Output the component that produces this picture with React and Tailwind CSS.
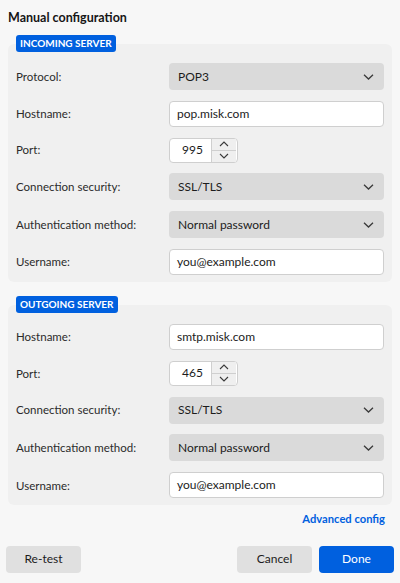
import React from 'react';

const Chevron = () => (
  <svg width="11" height="6" viewBox="0 0 11 6" className="text-[#3a3a3a]">
    <path d="M1 0.8 L5.5 5 L10 0.8" fill="none" stroke="currentColor" strokeWidth="1.3" />
  </svg>
);

const Select = ({ value }) => (
  <div className="h-[27px] w-[215px] rounded-[4px] bg-[#dadada] flex items-center justify-between pl-[9px] pr-[10px] text-[12px] text-[#1c1c1c]">
    <span>{value}</span>
    <Chevron />
  </div>
);

const TextInput = ({ value }) => (
  <div className="h-[26px] w-[215px] rounded-[4px] bg-white border border-[#cfcfcf] flex items-center px-[7px] text-[12px] text-[#1c1c1c]">
    {value}
  </div>
);

const PortInput = ({ value }) => (
  <div className="h-[25px] w-[69px] rounded-[4px] bg-white border border-[#cfcfcf] flex items-center">
    <span className="flex-1 text-right pr-[8px] text-[12px] text-[#1c1c1c]">{value}</span>
    <div className="w-[25px] h-[23px] mr-px flex flex-col border-l border-[#cfcfcf] bg-[#efefef]">
      <div className="flex-1 flex items-center justify-center border-b border-[#cfcfcf]">
        <svg width="10" height="6" viewBox="0 0 10 6">
          <path d="M1 5 L5 1 L9 5" fill="none" stroke="#3a3a3a" strokeWidth="1.1" />
        </svg>
      </div>
      <div className="flex-1 flex items-center justify-center">
        <svg width="10" height="6" viewBox="0 0 10 6">
          <path d="M1 1 L5 5 L9 1" fill="none" stroke="#3a3a3a" strokeWidth="1.1" />
        </svg>
      </div>
    </div>
  </div>
);

const Row = ({ label, children }) => (
  <div className="flex items-center">
    <div className="w-[161px] pl-[8px] text-[11.5px] text-[#2b2b2b]">{label}</div>
    {children}
  </div>
);

const Section = ({ title, children }) => (
  <div className="flex flex-col">
    <div className="relative z-10 self-start ml-[8px] h-[17px] px-[4px] rounded-[3px] bg-[#0060df] flex items-center text-[10px] font-bold text-white">
      {title}
    </div>
    <div className="-mt-[8px] rounded-[6px] bg-[#f0f0f0] pt-[19px] pb-[7px] flex flex-col gap-[10.8px]">
      {children}
    </div>
  </div>
);

export default function App() {
  return (
    <div
      className="w-[400px] h-[583px] bg-[#f7f7f7] px-[8px] pt-[9px] flex flex-col"
      style={{ fontFamily: 'Lato, "Noto Sans", sans-serif' }}
    >
      <h1 className="text-[12.5px] font-bold text-[#151515] leading-[17px] mb-[9px]">Manual configuration</h1>

      <Section title="INCOMING SERVER">
        <Row label="Protocol:"><Select value="POP3" /></Row>
        <Row label="Hostname:"><TextInput value="pop.misk.com" /></Row>
        <Row label="Port:"><PortInput value="995" /></Row>
        <Row label="Connection security:"><Select value="SSL/TLS" /></Row>
        <Row label="Authentication method:"><Select value="Normal password" /></Row>
        <Row label="Username:"><TextInput value="you@example.com" /></Row>
      </Section>

      <div className="h-[14px]" />

      <Section title="OUTGOING SERVER">
        <Row label="Hostname:"><TextInput value="smtp.misk.com" /></Row>
        <Row label="Port:"><PortInput value="465" /></Row>
        <Row label="Connection security:"><Select value="SSL/TLS" /></Row>
        <Row label="Authentication method:"><Select value="Normal password" /></Row>
        <Row label="Username:"><TextInput value="you@example.com" /></Row>
      </Section>

      <div className="flex justify-end pr-[7px] mt-[6px]">
        <span className="text-[11.2px] font-bold text-[#0060df]">Advanced config</span>
      </div>

      <div className="flex items-center mt-[18px] -mx-[2px]">
        <button className="h-[27px] w-[75px] rounded-[4px] bg-[#e0e0e0] text-[12px] text-[#1c1c1c]">Re-test</button>
        <div className="flex-1" />
        <button className="h-[27px] w-[75px] rounded-[4px] bg-[#e0e0e0] text-[12px] text-[#1c1c1c]">Cancel</button>
        <button className="ml-[7px] h-[27px] w-[75px] rounded-[4px] bg-[#0060df] text-[12px] text-white">Done</button>
      </div>
    </div>
  );
}
